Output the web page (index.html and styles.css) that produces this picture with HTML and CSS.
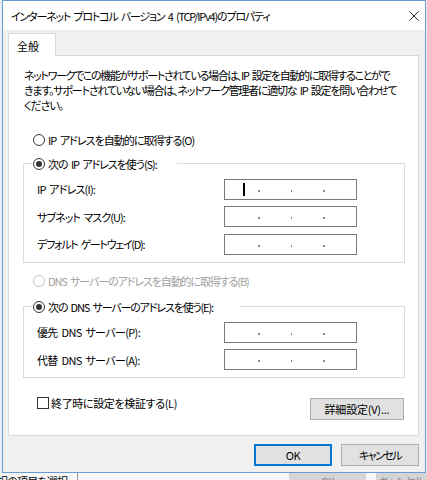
FILE: index.html
```html
<!DOCTYPE html>
<html lang="ja">
<head>
<meta charset="utf-8">
<title>インターネット プロトコル バージョン 4 (TCP/IPv4)のプロパティ</title>
<link rel="stylesheet" href="styles.css">
</head>
<body>
<div class="screen">
  <div class="window">
    <div class="titlebar">
      <span class="title">インターネット プロトコル バージョン 4 (TCP/IPv4)のプロパティ</span>
      <svg class="close" width="10" height="10" viewBox="0 0 10 10"><path d="M0.5 0.5L9.5 9.5M9.5 0.5L0.5 9.5" stroke="#222" stroke-width="1"/></svg>
    </div>
    <div class="body">
      <div class="tabs"><div class="tab">全般</div></div>
      <div class="panel">
        <p class="desc"><span class="d1">ネットワークでこの機能がサポートされている場合は、IP 設定を自動的に取得することがで</span><span class="d2">きます。サポートされていない場合は、ネットワーク管理者に適切な IP 設定を問い合わせて</span><span class="d3">ください。</span></p>

        <div class="radio radio-top">
          <svg width="12" height="12" viewBox="0 0 12 12"><circle cx="6" cy="6" r="5.5" fill="#fff" stroke="#333"/></svg>
          <span class="t-r1">IP アドレスを自動的に取得する(O)</span>
        </div>

        <fieldset class="group group-ip">
          <legend class="radio legend-ip">
            <svg width="12" height="12" viewBox="0 0 12 12"><circle cx="6" cy="6" r="5.5" fill="#fff" stroke="#333"/><circle cx="6" cy="6" r="3" fill="#333"/></svg>
            <span class="t-lg1">次の IP アドレスを使う(S):</span>
          </legend>
          <div class="fields">
            <div class="field"><span class="flabel t-l1">IP アドレス(I):</span><div class="ip focus"><i class="caret"></i><i class="dot"></i><i class="dot"></i><i class="dot"></i></div></div>
            <div class="field"><span class="flabel t-l2">サブネット マスク(U):</span><div class="ip"><i class="dot"></i><i class="dot"></i><i class="dot"></i></div></div>
            <div class="field"><span class="flabel t-l3">デフォルト ゲートウェイ(D):</span><div class="ip"><i class="dot"></i><i class="dot"></i><i class="dot"></i></div></div>
          </div>
        </fieldset>

        <div class="radio radio-dns-auto">
          <svg width="12" height="12" viewBox="0 0 12 12"><circle cx="6" cy="6" r="5.5" fill="#fff" stroke="#c4c4c4"/></svg>
          <span class="t-r2">DNS サーバーのアドレスを自動的に取得する(B)</span>
        </div>

        <fieldset class="group group-dns">
          <legend class="radio legend-dns">
            <svg width="12" height="12" viewBox="0 0 12 12"><circle cx="6" cy="6" r="5.5" fill="#fff" stroke="#333"/><circle cx="6" cy="6" r="3" fill="#333"/></svg>
            <span class="t-lg2">次の DNS サーバーのアドレスを使う(E):</span>
          </legend>
          <div class="fields">
            <div class="field"><span class="flabel t-l4">優先 DNS サーバー(P):</span><div class="ip"><i class="dot"></i><i class="dot"></i><i class="dot"></i></div></div>
            <div class="field"><span class="flabel t-l4">代替 DNS サーバー(A):</span><div class="ip"><i class="dot"></i><i class="dot"></i><i class="dot"></i></div></div>
          </div>
        </fieldset>

        <div class="bottom-row">
          <div class="check">
            <svg width="12" height="12" viewBox="0 0 12 12"><rect x="0.5" y="0.5" width="11" height="11" fill="#fff" stroke="#333"/></svg>
            <span class="t-cb">終了時に設定を検証する(L)</span>
          </div>
          <button class="btn btn-detail">詳細設定(V)...</button>
        </div>
      </div>
      <div class="actions">
        <button class="btn btn-default">OK</button>
        <button class="btn btn-cancel">キャンセル</button>
      </div>
    </div>
  </div>
  <div class="below">
    <div class="below-text">択の項目を選択</div>
    <div class="below-gap"></div>
    <div class="ghost ghost-ok">OK</div>
    <div class="ghost ghost-cancel">キャンセル</div>
  </div>
</div>
</body>
</html>
```
FILE: styles.css
```css
* { box-sizing: border-box; }
html, body { margin: 0; padding: 0; }
body {
  width: 427px;
  height: 480px;
  overflow: hidden;
  background: #eaeff5;
  font-family: "Noto Sans CJK JP", "Noto Sans", sans-serif;
  font-size: 11px;
  word-spacing: 2px;
  color: #000;
  font-feature-settings: "palt";
}
.screen { width: 427px; height: 480px; display: flex; flex-direction: column; }
.window {
  margin-left: 2px;
  width: 424px;
  height: 473px;
  flex: none;
  border: 1px solid #6b9bd6;
  background: #f0f0f0;
  display: flex;
  flex-direction: column;
}
.titlebar {
  height: 29px;
  flex: none;
  background: #fff;
  display: flex;
  align-items: center;
  justify-content: space-between;
  padding: 0 6px 0 8px;
  white-space: nowrap;
}
.title { letter-spacing: -1.2px; }
.close { display: block; }
.body { flex: 1; display: flex; flex-direction: column; padding: 3px 6px 0 5px; }
.tabs { display: flex; }
.tab {
  width: 48px;
  height: 23px;
  border: 1px solid #d9d9d9;
  border-bottom: 0;
  background: #fff;
  margin-bottom: -1px;
  position: relative;
  z-index: 1;
  padding: 4px 0 0 8px;
  line-height: 16px;
}
.panel {
  height: 381px;
  flex: none;
  border: 1px solid #d9d9d9;
  background: #fff;
  display: flex;
  flex-direction: column;
  align-items: flex-start;
}
.desc { margin: 12px 0 0 15px; line-height: 15px; }
.desc span { display: block; white-space: nowrap; }
.d1 { letter-spacing: -1.35px; }
.d2 { letter-spacing: -1.2px; }
.d3 { letter-spacing: -1.05px; }
.t-r1 { letter-spacing: -0.95px; }
.t-lg1 { letter-spacing: -1.05px; }
.t-l1 { letter-spacing: -0.8px; }
.t-l2 { letter-spacing: -0.95px; }
.t-l3 { letter-spacing: -1.3px; }
.t-r2 { letter-spacing: -1.1px; }
.t-lg2 { letter-spacing: -1.15px; }
.t-l4 { letter-spacing: -0.65px; }
.t-cb { letter-spacing: -0.35px; }
.radio { display: flex; align-items: center; gap: 3px; height: 16px; line-height: 16px; white-space: nowrap; }
.radio svg, .check svg { display: block; flex: none; }
.radio-top { margin: 19px 0 0 24px; }
.radio-dns-auto { margin: 10.5px 0 0 24px; color: #a0a0a0; }
.group {
  align-self: stretch;
  margin: 7.5px 13px 0 14px;
  border: 1px solid #dcdcdc;
  padding: 7px 0;
  min-width: 0;
}
.group-dns { margin-top: 9.5px; padding-bottom: 6.5px; }
.group legend { margin-left: 8px; padding: 0 0 0 1px; }
.legend-ip { width: 145px; }
.legend-dns { width: 208px; }
.fields { display: flex; flex-direction: column; gap: 6.5px; padding-left: 13px; }
.field { display: flex; align-items: center; height: 21px; }
.flabel { flex: 0 0 187px; white-space: nowrap; }
.ip {
  width: 133px;
  height: 21px;
  border: 1px solid #7a7a7a;
  background: #fff;
  display: flex;
  align-items: center;
  padding-left: 33px;
}
.ip .dot { display: block; width: 2px; height: 2px; background: #8a8a8a; margin: 3px 31px 0 0; }
.ip.focus { padding-left: 18px; }
.ip .caret { display: block; width: 2px; height: 13px; background: #000; margin-right: 13px; }
.bottom-row {
  align-self: stretch;
  margin-top: 17.5px;
  display: flex;
  justify-content: space-between;
  align-items: flex-start;
  padding: 0 14px 0 28px;
}
.check { display: flex; align-items: center; gap: 2px; height: 16px; white-space: nowrap; }
.btn {
  height: 22px;
  background: #e1e1e1;
  border: 1px solid #adadad;
  font: inherit;
  word-spacing: inherit;
  color: #000;
  padding: 0;
  margin: 0;
  display: flex;
  align-items: center;
  justify-content: center;
  white-space: nowrap;
}
.btn-detail { width: 94px; margin-top: 3px; letter-spacing: -0.2px; }
.actions { display: flex; justify-content: flex-end; gap: 9px; margin-top: 8px; }
.actions .btn { width: 78px; }
.btn-default { border-color: #0078d7; box-shadow: inset 0 0 0 1px #0078d7; letter-spacing: -0.3px; }
.btn-cancel { letter-spacing: -1.5px; }
.below { height: 7px; flex: none; display: flex; background: #f7f7f7; overflow: hidden; }
.below-text {
  width: 78px;
  flex: none;
  border-right: 1px solid #9a9a9a;
  line-height: 14px;
  padding-top: 1px;
  white-space: nowrap;
  overflow: hidden;
  text-indent: -3px;
  letter-spacing: -0.8px;
}
.below-gap { width: 211px; flex: none; }
.ghost { flex: none; background: #d5d5d5; color: #8a8a8a; line-height: 14px; padding-top: 1px; text-align: center; overflow: hidden; letter-spacing: -1px; }
.ghost-ok { width: 77px; margin-right: 10px; }
.ghost-cancel { width: 51px; }
```
